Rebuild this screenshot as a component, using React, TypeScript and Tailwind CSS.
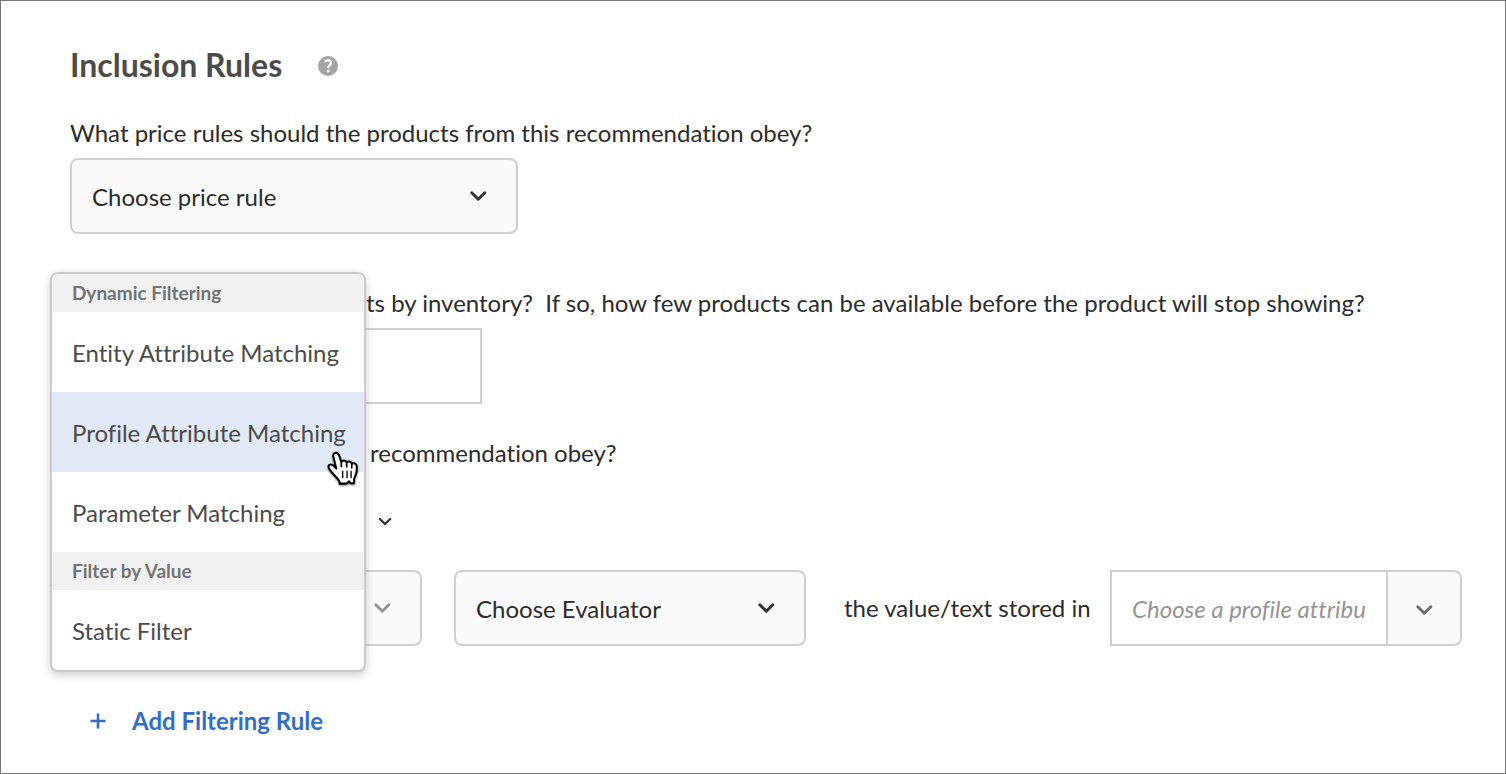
import React from "react";

type ChevronProps = { className?: string };

function Chevron({ className = "" }: ChevronProps) {
  return (
    <svg
      viewBox="0 0 24 24"
      className={`pointer-events-none size-6 shrink-0 ${className}`}
      fill="none"
      stroke="currentColor"
      strokeWidth="3"
      strokeLinecap="round"
      strokeLinejoin="round"
      aria-hidden="true"
    >
      <path d="M5.8 8.8 12.3 15.2 18.8 8.8" />
    </svg>
  );
}

type PickerProps = {
  id: string;
  label: string;
  placeholder: string;
  width: string;
  hideLabel?: boolean;
  disabled?: boolean;
};

function Picker({ id, label, placeholder, width, hideLabel, disabled }: PickerProps) {
  return (
    <div className={`shrink-0 ${width}`}>
      {!hideLabel && (
        <label htmlFor={id} className="mb-2 block whitespace-nowrap">
          {label}
        </label>
      )}
      <div className="grid items-center">
        <select
          id={id}
          aria-label={hideLabel ? label : undefined}
          disabled={disabled}
          className="col-start-1 row-start-1 h-19 w-full appearance-none rounded-lg border-2 border-[#d0d0d0] bg-[#fafafa] px-5 pt-0.5 outline-none"
        >
          {placeholder && <option>{placeholder}</option>}
        </select>
        <Chevron
          className={`col-start-1 row-start-1 mr-7 justify-self-end ${
            disabled ? "text-[#959595]" : "text-[#323232]"
          }`}
        />
      </div>
    </div>
  );
}

function HandPointer() {
  return (
    <svg
      viewBox="0 0 100 110"
      className="pointer-events-none absolute right-1 -bottom-4 h-[37px] w-[34px] drop-shadow-[0_1px_1px_rgba(0,0,0,0.5)]"
      aria-hidden="true"
    >
      <path
        d="M40 97 L39 89 C33 80 24 72 17 64 C12 58 6 51 7 45 C8 39 16 38 22 44 L30 52 L22 20 C19 10 23 5 29 5 C34 5 37 9 39 15 L45 33 C47 27 58 27 61 34 C65 29 74 31 76 38 C82 34 91 38 91 46 C92 58 91 65 87 73 L83 83 L83 96 L72 96 L68 90 L61 97 Z"
        fill="#fff"
        stroke="#000"
        strokeWidth="6"
        strokeLinejoin="round"
      />
      <path d="M45 34 V46 M61 36 V47 M76 40 V50" stroke="#000" strokeWidth="5" strokeLinecap="round" />
      <path d="M49 59 V81 M62 59 V81 M74 59 V81" stroke="#000" strokeWidth="4" />
    </svg>
  );
}

const groups = [
  {
    title: "Dynamic Filtering",
    items: ["Entity Attribute Matching", "Profile Attribute Matching", "Parameter Matching"],
  },
  { title: "Filter by Value", items: ["Static Filter"] },
];

function FilterMenu() {
  return (
    <div className="absolute -bottom-[26px] -left-5 w-79 rounded-lg border-2 border-[#cacaca] bg-white text-[#4b4b4b] shadow-[0_3px_8px_rgba(0,0,0,0.2)]">
      {groups.map((group) => (
        <section key={group.title} className="group">
          <h2 className="flex h-[38px] items-center bg-[#f1f1f1] px-5 text-[19px] font-bold text-[#747474] group-first:rounded-t-md">
            {group.title}
          </h2>
          <ul>
            {group.items.map((item) => {
              const active = item === "Profile Attribute Matching";
              return (
                <li key={item} className={`relative ${active ? "bg-[#e2e9f6]" : ""}`}>
                  <button type="button" className="h-20 w-full px-5 pt-0.5 text-left whitespace-nowrap">
                    {item}
                  </button>
                  {active && <HandPointer />}
                </li>
              );
            })}
          </ul>
        </section>
      ))}
    </div>
  );
}

export default function App() {
  return (
    <main className="min-h-screen border border-[#777] bg-white pt-11 pr-[43px] pb-8 pl-[69px] font-['Lato','Noto_Sans',sans-serif] text-2xl leading-[34px] text-[#2c2c2c] [font-variant-ligatures:none]">
      <header className="mb-[31px] flex items-center gap-9">
        <h1 className="text-[32px] leading-10 font-bold text-[#4b4b4b]">Inclusion Rules</h1>
        <button type="button" aria-label="Help" className="pt-0.5">
          <svg viewBox="0 0 20 20" className="size-5" aria-hidden="true">
            <circle cx="10" cy="10" r="10" fill="#a4a4a4" />
            <path
              d="M6.8 5.6C7.8 4.7 8.9 4.3 10.1 4.3 12.1 4.3 13.1 5.4 13.1 6.9 13.1 9.1 10.1 9.3 10.1 12"
              fill="none"
              stroke="#fff"
              strokeWidth="2.3"
            />
            <circle cx="10.1" cy="15" r="1.5" fill="#fff" />
          </svg>
        </button>
      </header>

      <Picker
        id="price"
        label="What price rules should the products from this recommendation obey?"
        placeholder="Choose price rule"
        width="w-112"
      />

      <div className="mt-13">
        <label htmlFor="inventory" className="mb-2 block pl-74 whitespace-pre">
          {"ts by inventory?  If so, how few products can be available before the product will stop showing?"}
        </label>
        <input id="inventory" className="block h-19 w-103 border-2 border-[#d0d0d0] px-5 outline-none" />
      </div>

      <section className="relative mt-8">
        <p className="pl-75">recommendation obey?</p>
        <button type="button" aria-label="Filter type" className="mt-4 ml-[305px] flex h-[70px] items-center">
          <svg
            viewBox="0 0 20 20"
            className="size-5"
            fill="none"
            stroke="#2c2c2c"
            strokeWidth="2.2"
            strokeLinecap="round"
            strokeLinejoin="round"
            aria-hidden="true"
          >
            <path d="M4.8 8 10 13 15.2 8" />
          </svg>
        </button>
        <div className="mt-[14px] flex items-center">
          <Picker id="attribute" label="Attribute" placeholder="" width="w-88" hideLabel disabled />
          <div className="ml-8">
            <Picker id="evaluator" label="Evaluator" placeholder="Choose Evaluator" width="w-88" hideLabel />
          </div>
          <label htmlFor="profile" className="grow pl-[38px] whitespace-nowrap">
            the value/text stored in
          </label>
          <div className="flex h-19 w-88 shrink-0">
            <div className="min-w-0 grow border-2 border-r-0 border-[#d0d0d0] px-5">
              <input
                id="profile"
                placeholder="Choose a profile attribute"
                className="h-full w-full italic outline-none placeholder:text-[#959595]"
              />
            </div>
            <button
              type="button"
              aria-label="Show profile attributes"
              className="flex w-19 shrink-0 items-center justify-center rounded-r-lg border-2 border-[#d0d0d0] bg-[#fafafa] pt-1 text-[#6e6e6e]"
            >
              <Chevron />
            </button>
          </div>
        </div>
        <FilterMenu />
      </section>

      <button
        type="button"
        className="mt-[58px] ml-5 flex items-center gap-[26px] font-bold text-[#326ec8]"
      >
        <svg viewBox="0 0 16 16" className="size-4" stroke="currentColor" strokeWidth="2.6" aria-hidden="true">
          <path d="M8 0.5V15.5M0.5 8H15.5" />
        </svg>
        Add Filtering Rule
      </button>
    </main>
  );
}
